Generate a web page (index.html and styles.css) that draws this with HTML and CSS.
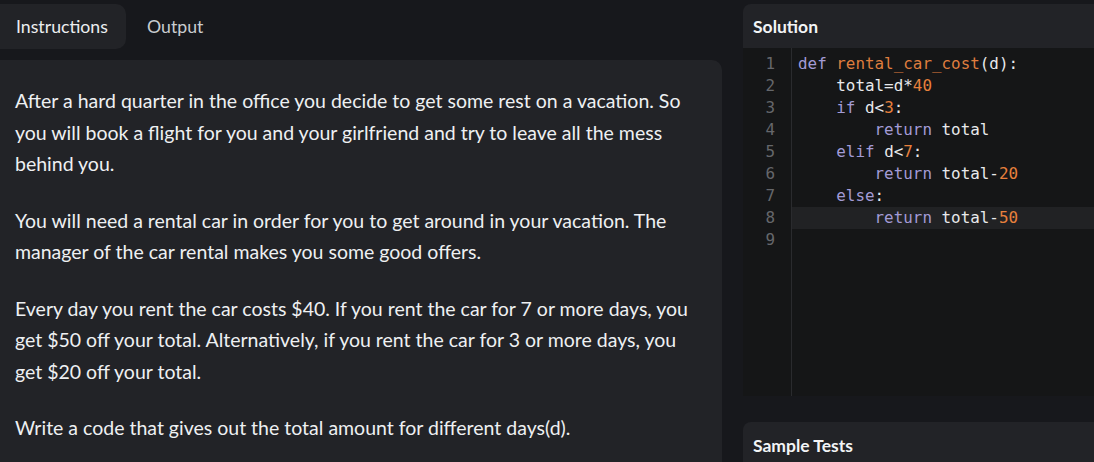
FILE: index.html
```html
<!DOCTYPE html>
<html>
<head>
<meta charset="utf-8">
<link rel="stylesheet" href="styles.css">
</head>
<body>
<div class="page">
  <section class="left">
    <nav class="tabs">
      <div class="tab active">Instructions</div>
      <div class="tab">Output</div>
    </nav>
    <article class="desc">
      <p>After a hard quarter in the office you decide to get some rest on a vacation. So you will book a flight for you and your girlfriend and try to leave all the mess behind you.</p>
      <p>You will need a rental car in order for you to get around in your vacation. The manager of the car rental makes you some good offers.</p>
      <p>Every day you rent the car costs $40. If you rent the car for 7 or more days, you get $50 off your total. Alternatively, if you rent the car for 3 or more days, you get $20 off your total.</p>
      <p>Write a code that gives out the total amount for different days(d).</p>
    </article>
  </section>
  <section class="right">
    <div class="card">
      <header class="card-head">Solution</header>
      <div class="editor">
        <div class="gutter">
          <div>1</div><div>2</div><div>3</div><div>4</div><div>5</div><div>6</div><div>7</div><div>8</div><div>9</div>
        </div>
        <div class="code">
          <div class="ln"><span class="kw">def</span> <span class="fn">rental_car_cost</span>(d):</div>
          <div class="ln">    total=d*<span class="num">40</span></div>
          <div class="ln">    <span class="kw">if</span> d&lt;<span class="num">3</span>:</div>
          <div class="ln">        <span class="kw">return</span> total</div>
          <div class="ln">    <span class="kw">elif</span> d&lt;<span class="num">7</span>:</div>
          <div class="ln">        <span class="kw">return</span> total-<span class="num">20</span></div>
          <div class="ln">    <span class="kw">else</span>:</div>
          <div class="ln active">        <span class="kw">return</span> total-<span class="num">50</span></div>
          <div class="ln"> </div>
        </div>
      </div>
    </div>
    <div class="card tests">
      <header class="card-head">Sample Tests</header>
    </div>
  </section>
</div>
</body>
</html>
```
FILE: styles.css
```css
html, body {
  margin: 0;
  padding: 0;
  background: #17181c;
  overflow: hidden;
  height: 462px;
}
.page {
  display: flex;
  gap: 21px;
  width: 1120px;
  font-family: Lato, "Open Sans", sans-serif;
}
.left {
  width: 722px;
  flex: none;
}
.tabs {
  display: flex;
  padding-top: 4px;
  gap: 2px;
}
.tab {
  height: 45px;
  box-sizing: border-box;
  padding: 0 19px 0 16px;
  display: flex;
  align-items: center;
  font-size: 17.7px;
  color: #c9ccd0;
}
.tab.active {
  background: #222327;
  color: #eceef0;
  width: 126px;
  border-radius: 0 10px 10px 0;
}
.tab + .tab {
  padding-left: 19px;
}
.desc {
  margin-top: 11px;
  background: #222327;
  border-radius: 0 10px 0 0;
  padding: 25px 15px 20px 15px;
  height: 480px;
  box-sizing: border-box;
}
.desc p {
  margin: 0 0 25px;
  font-size: 19.5px;
  line-height: 31.5px;
  color: #eef0f2;
}
.right {
  flex: 1;
  display: flex;
  flex-direction: column;
  padding-top: 4px;
  gap: 26px;
}
.card {
  background: #222327;
  border-radius: 8px 0 0 0;
  overflow: hidden;
}
.card-head {
  height: 44px;
  display: flex;
  align-items: center;
  padding-left: 10px;
  font-weight: bold;
  font-size: 17.5px;
  color: #f2f4f6;
}
.editor {
  display: flex;
  background: #151617;
  height: 348px;
  font-family: "DejaVu Sans Mono", monospace;
  font-size: 15.9px;
  line-height: 22px;
}
.gutter {
  width: 49px;
  flex: none;
  box-sizing: border-box;
  border-right: 1px solid #2a2b2e;
  padding: 5px 16px 0 0;
  text-align: right;
  color: #65676b;
}
.code {
  flex: 1;
  padding-top: 5px;
  color: #e8e9eb;
}
.ln {
  padding-left: 6px;
  height: 22px;
  white-space: pre;
}
.ln.active {
  background: #212224;
}
.kw { color: #a39bd6; }
.fn { color: #df7d3e; }
.num { color: #e8803c; }
.tests .card-head {
  height: 46px;
}
```
